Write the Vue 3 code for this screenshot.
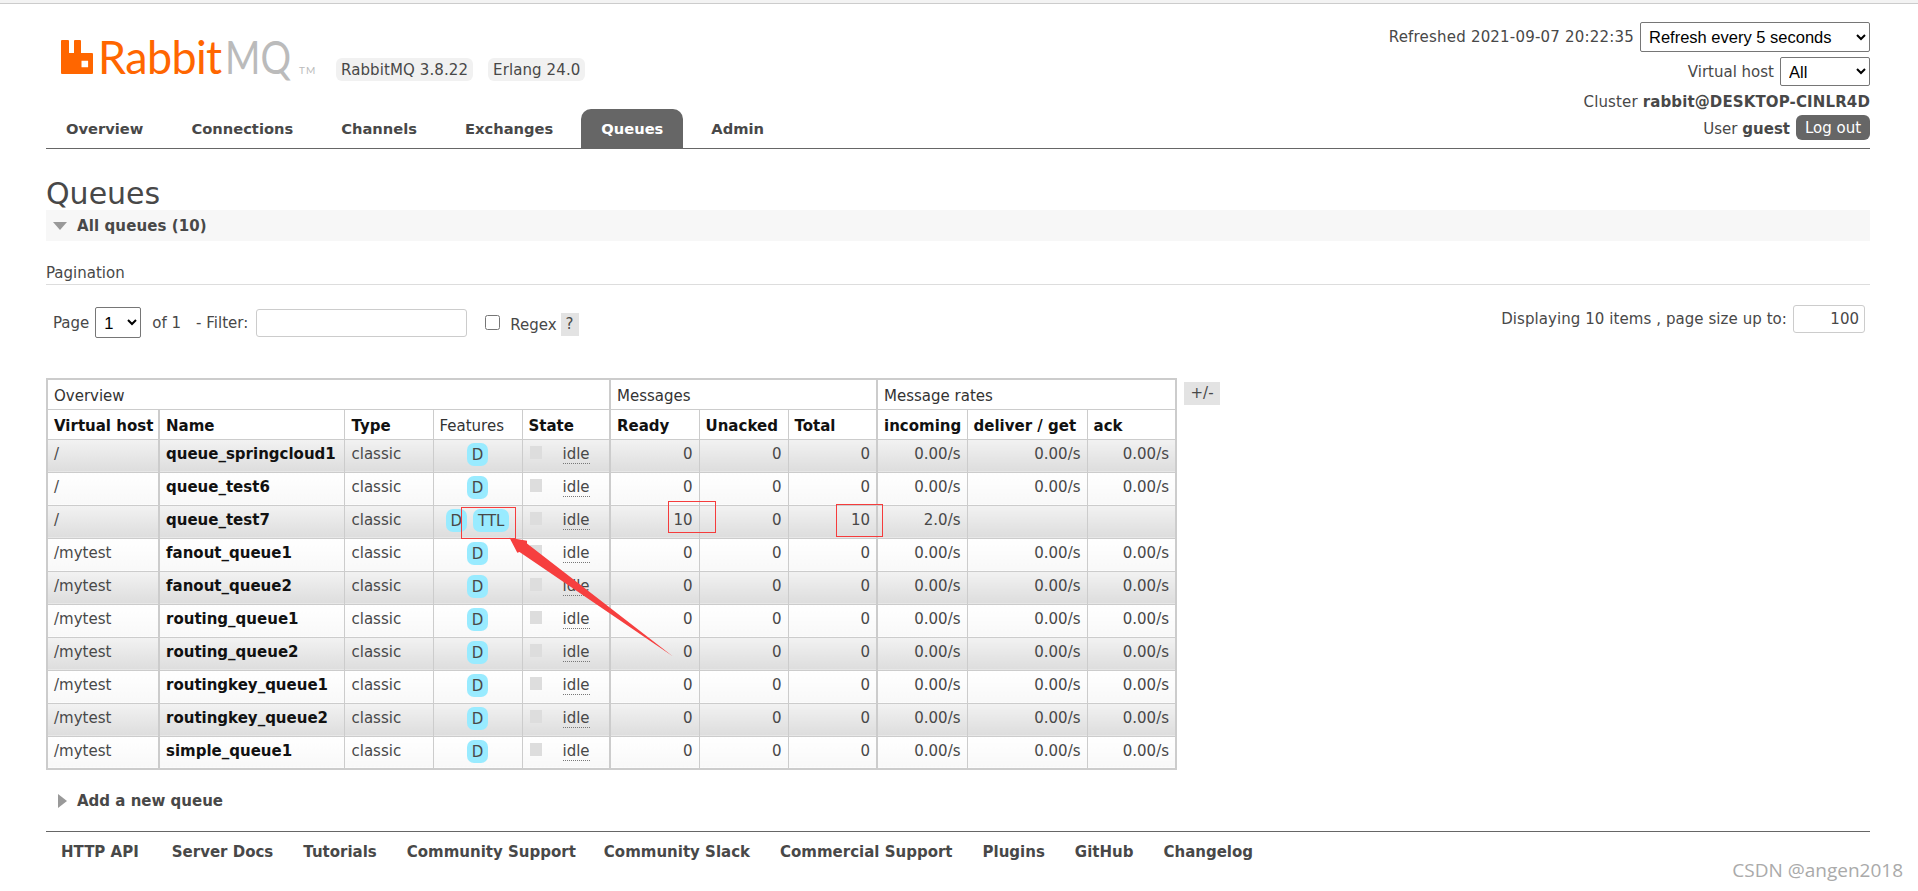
<script setup>
const tabs = ['Overview', 'Connections', 'Channels', 'Exchanges', 'Queues', 'Admin']
const footerLinks = ['HTTP API', 'Server Docs', 'Tutorials', 'Community Support', 'Community Slack', 'Commercial Support', 'Plugins', 'GitHub', 'Changelog']
const zero = { ready: 0, unacked: 0, total: 0, incoming: '0.00/s', deliver: '0.00/s', ack: '0.00/s', features: ['D'] }
const queues = [
  { vhost: '/', name: 'queue_springcloud1', ...zero },
  { vhost: '/', name: 'queue_test6', ...zero },
  { vhost: '/', name: 'queue_test7', ready: 10, unacked: 0, total: 10, incoming: '2.0/s', deliver: '', ack: '', features: ['D', 'TTL'] },
  { vhost: '/mytest', name: 'fanout_queue1', ...zero },
  { vhost: '/mytest', name: 'fanout_queue2', ...zero },
  { vhost: '/mytest', name: 'routing_queue1', ...zero },
  { vhost: '/mytest', name: 'routing_queue2', ...zero },
  { vhost: '/mytest', name: 'routingkey_queue1', ...zero },
  { vhost: '/mytest', name: 'routingkey_queue2', ...zero },
  { vhost: '/mytest', name: 'simple_queue1', ...zero }
]
</script>

<template>
  <div class="shell">
    <div class="strip"></div>
    <div class="page">
      <header class="header">
        <div class="brand">
          <div class="logo-row">
            <svg class="mark" width="33" height="34" viewBox="0 0 33 34">
              <path fill="#ff6600" fill-rule="evenodd" d="M1 0h6a1 1 0 0 1 1 1v12h5V1a1 1 0 0 1 1-1h5a1 1 0 0 1 1 1v12h11a1 1 0 0 1 1 1v19a1 1 0 0 1-1 1H1a1 1 0 0 1-1-1V1a1 1 0 0 1 1-1zM20.500 20.700v6.600h6.600v-6.600z" />
            </svg>
            <div class="wordmark"><span class="rabbit">Rabbit</span><span class="mq">MQ</span><span class="tm">TM</span></div>
            <span class="version first">RabbitMQ 3.8.22</span>
            <span class="version">Erlang 24.0</span>
          </div>
          <nav class="tabs">
            <span v-for="t in tabs" :key="t" class="tab" :class="{ active: t === 'Queues' }">{{ t }}</span>
          </nav>
        </div>
        <div class="session">
          <div class="s-row r1">
            <span class="spaced">Refreshed 2021-09-07 20:22:35</span>
            <select class="native refresh"><option>Refresh every 5 seconds</option></select>
          </div>
          <div class="s-row r2">
            <span>Virtual host</span>
            <select class="native vhost"><option>All</option></select>
          </div>
          <div class="s-row r3"><span class="cluster">Cluster <b>rabbit@DESKTOP-CINLR4D</b></span></div>
          <div class="s-row r4"><span class="user">User <b>guest</b></span><span class="logout">Log out</span></div>
        </div>
      </header>

      <h1 class="title">Queues</h1>
      <div class="all-bar"><i class="tri-down"></i><b>All queues (10)</b></div>

      <div class="pagination-head">Pagination</div>
      <div class="pager">
        <div class="pager-left">
          <span>Page</span>
          <select class="native page-sel"><option>1</option></select>
          <span class="of">of 1</span>
          <span class="filter">- Filter:</span>
          <input class="filter-input" type="text" />
          <input class="regex-box" type="checkbox" />
          <span class="regex">Regex</span>
          <span class="help">?</span>
        </div>
        <div class="pager-right">
          <span class="displaying">Displaying 10 items , page size up to:</span>
          <input class="size-input" type="text" value="100" />
        </div>
      </div>

      <div class="table-row">
        <table class="list">
          <colgroup>
            <col class="c1" /><col class="c2" /><col class="c3" /><col class="c4" /><col class="c5" />
            <col class="c6" /><col class="c7" /><col class="c8" /><col class="c9" /><col class="c10" /><col class="c11" />
          </colgroup>
          <thead>
            <tr class="group">
              <th colspan="5" class="thick-r">Overview</th>
              <th colspan="3" class="thick-r">Messages</th>
              <th colspan="3">Message rates</th>
            </tr>
            <tr class="cols">
              <th class="thick-r">Virtual host</th>
              <th>Name</th>
              <th class="type">Type</th>
              <th class="plain">Features</th>
              <th class="thick-r">State</th>
              <th>Ready</th>
              <th>Unacked</th>
              <th class="thick-r">Total</th>
              <th>incoming</th>
              <th>deliver / get</th>
              <th>ack</th>
            </tr>
          </thead>
          <tbody>
            <tr v-for="(q, i) in queues" :key="q.name" :class="i % 2 ? 'alt2' : 'alt1'">
              <td class="thick-r">{{ q.vhost }}</td>
              <td class="name">{{ q.name }}</td>
              <td class="type">classic</td>
              <td class="features">
                <span v-for="f in q.features" :key="f" class="feat">{{ f }}</span>
              </td>
              <td class="thick-r state"><i class="state-box"></i><span class="idle">idle</span></td>
              <td class="num">{{ q.ready }}</td>
              <td class="num">{{ q.unacked }}</td>
              <td class="num thick-r">{{ q.total }}</td>
              <td class="num">{{ q.incoming }}</td>
              <td class="num">{{ q.deliver }}</td>
              <td class="num">{{ q.ack }}</td>
            </tr>
          </tbody>
        </table>
        <span class="plus-minus">+/-</span>
      </div>

      <div class="add-new"><i class="tri-right"></i><b>Add a new queue</b></div>

      <footer class="footer">
        <span v-for="l in footerLinks" :key="l">{{ l }}</span>
      </footer>
    </div>

    <svg class="annotations" width="1918" height="891" viewBox="0 0 1918 891">
      <g fill="none" stroke="#f53c3c" stroke-width="1">
        <rect x="461.500" y="507.500" width="54" height="31" />
        <rect x="668.500" y="501.500" width="47" height="31" />
        <rect x="836.500" y="504.500" width="46" height="32" />
      </g>
      <polygon fill="#f63f3f" points="509.500,537.700 527,540.700 527,543.500 672.700,656.300 519.500,552 517.300,552.700" />
    </svg>
    <div class="watermark">CSDN @angen2018</div>
  </div>
</template>

<style>
html, body { margin: 0; background: #fff; overflow: hidden; }
</style>

<style scoped>
.shell {
  position: relative;
  width: 1918px;
  height: 891px;
  overflow: hidden;
  font-family: "DejaVu Sans", Verdana, sans-serif;
  font-size: 15px;
  color: #484848;
  background: #fff;
}
.strip { height: 3px; background: #f3f3f3; border-bottom: 1px solid #ccc; }
.page { padding: 0 48px 0 46px; }
.header {
  height: 145px;
  box-sizing: border-box;
  display: flex;
  justify-content: space-between;
  border-bottom: 1px solid #666;
}
.brand { display: flex; flex-direction: column; }
.logo-row { display: flex; align-items: flex-start; height: 105px; padding-top: 36px; padding-left: 15px; box-sizing: border-box; }
.mark { flex: none; display: block; }
.wordmark {
  margin-left: 4px;
  width: 238px;
  height: 34px;
  display: flex;
  align-items: baseline;
  font-family: "Lato", sans-serif;
  font-size: 46px;
  line-height: 34px;
}
.rabbit {
  color: #ff6600;
  letter-spacing: -0.6px;
  display: inline-block;
  width: 127px;
  transform: scaleX(0.975);
  transform-origin: left center;
}
.mq {
  color: #bbbbbb;
  width: 69px;
  display: inline-block;
  transform: scaleX(0.83);
  transform-origin: left center;
}
.tm { color: #bbb; font-size: 10px; letter-spacing: 1px; margin-left: 5px; }
.version {
  margin-top: 18px;
  height: 23px;
  line-height: 24px;
  padding: 0 5px;
  border-radius: 6px;
  background: #f1f1f1;
  color: #484848;
  letter-spacing: 0.1px;
  white-space: nowrap;
}
.version.first { margin-right: 15px; }
.tabs { display: flex; gap: 8px; height: 39px; }
.tab {
  height: 39px;
  line-height: 40px;
  padding: 0 20px;
  font-weight: 700;
  font-size: 14.700px;
  color: #484848;
  box-sizing: border-box;
  white-space: nowrap;
}
.tab.active { background: #666; color: #fff; border-radius: 10px 10px 0 0; }
.session { display: flex; flex-direction: column; align-items: flex-end; }
.s-row { display: flex; align-items: center; gap: 6px; white-space: nowrap; }
.spaced { letter-spacing: 0.2px; }
.cluster { letter-spacing: 0.13px; }
.user { padding-top: 2px; }
.r1 { margin-top: 18px; height: 30px; }
.r2 { margin-top: 5px; height: 29px; }
.r3 { margin-top: 4px; height: 24px; }
.r4 { margin-top: 1px; height: 25px; }
.native {
  font-family: "Liberation Sans", Arial, sans-serif;
  font-size: 16.500px;
  color: #000;
  background: #fff;
  border: 1px solid #767676;
  border-radius: 2px;
  box-sizing: border-box;
  padding: 0 0 0 4px;
  margin: 0;
}
.refresh { width: 230px; height: 30px; }
.vhost { width: 90px; height: 29px; }
.logout {
  height: 25px;
  line-height: 27px;
  width: 74px;
  text-align: center;
  background: #666;
  color: #fff;
  border-radius: 6px;
}
.title {
  margin: 28px 0 0;
  height: 33px;
  font-weight: 400;
  font-size: 30px;
  line-height: 33px;
  color: #484848;
}
.all-bar {
  height: 31px;
  line-height: 30px;
  background: #f7f7f7;
  display: flex;
  align-items: center;
  letter-spacing: 0.1px;
}
.tri-down {
  margin-left: 7px;
  margin-right: 10px;
  width: 0;
  height: 0;
  border-left: 7.500px solid transparent;
  border-right: 7.500px solid transparent;
  border-top: 8px solid #999;
}
.pagination-head {
  margin-top: 21px;
  height: 22px;
  line-height: 22px;
  border-bottom: 1px solid #ddd;
}
.pager {
  display: flex;
  justify-content: space-between;
  align-items: flex-start;
  margin-top: 20px;
  height: 73px;
}
.pager-left { display: flex; align-items: center; padding-left: 7px; height: 33px; margin-top: 1px; white-space: nowrap; }
.page-sel { width: 46px; height: 31px; margin-left: 6px; }
.of { margin-left: 11px; }
.filter { margin-left: 15px; }
.filter-input {
  width: 211px;
  height: 28px;
  margin: 0 0 0 8px;
  box-sizing: border-box;
  border: 1px solid #ccc;
  border-radius: 3px;
  background: #fff;
}
.regex-box { width: 15px; height: 15px; margin: 0 0 0 18px; }
.regex { margin-left: 10px; position: relative; top: 2px; }
.help {
  margin-left: 4px;
  width: 18px;
  height: 23px;
  line-height: 23px;
  text-align: center;
  background: #e3e3e3;
  position: relative;
  top: 2px;
}
.pager-right { display: flex; align-items: center; gap: 6px; padding-right: 5px; height: 28px; white-space: nowrap; }
.displaying { letter-spacing: 0.07px; }
.size-input {
  width: 72px;
  height: 28px;
  box-sizing: border-box;
  border: 1px solid #ccc;
  border-radius: 3px;
  margin: 0;
  padding: 0 5px;
  text-align: right;
  font-family: "DejaVu Sans", sans-serif;
  font-size: 15px;
  color: #484848;
}
.table-row { display: flex; align-items: flex-start; }
.list {
  table-layout: fixed;
  width: 1129px;
  border-collapse: collapse;
  border: 2px solid #ccc;
  flex: none;
}
.c1 { width: 112px; } .c2 { width: 185px; } .c3 { width: 89px; } .c4 { width: 89px; } .c5 { width: 88px; }
.c6 { width: 89px; } .c7 { width: 89px; } .c8 { width: 89px; } .c9 { width: 90px; } .c10 { width: 120px; } .c11 { width: 89px; }
.list th, .list td {
  border: 1px solid #ccc;
  padding: 0 6px;
  white-space: nowrap;
  overflow: visible;
  text-align: left;
  box-sizing: border-box;
}
.list th.type, .list td.type { padding-left: 7px; }
.list th { padding-top: 4px; }
.group th { height: 30px; font-weight: 400; color: #333; vertical-align: middle; }
.cols th { height: 30px; font-weight: 700; color: #111; vertical-align: middle; }
.cols th.plain { font-weight: 400; color: #333; }
.list th.thick-r, .list td.thick-r { border-right-width: 2px; }
.list td { height: 33px; vertical-align: top; padding-top: 5px; line-height: 18px; }
.alt1 td { background: linear-gradient(#f2f2f2, #dddddd); }
.alt2 td { background: linear-gradient(#ffffff, #f8f8f8); }
.list td.name { font-weight: 700; color: #111; }
.list td.num { text-align: right; }
.list td.features { text-align: center; padding: 3px 0 0; }
.feat {
  display: inline-block;
  height: 23px;
  line-height: 25px;
  padding: 0 5px;
  background: #99ebff;
  border-radius: 7px;
}
.feat + .feat { margin-left: 6px; }
.list td.state { padding-left: 7px; }
.state-box { display: inline-block; width: 12px; height: 13px; background: #ddd; margin-right: 21px; vertical-align: top; margin-top: 1px; }
.idle { border-bottom: 1px dotted #777; line-height: 17px; display: inline-block; }
.plus-minus {
  margin: 4px 0 0 7px;
  width: 36px;
  height: 23px;
  line-height: 23px;
  text-align: center;
  background: #e3e3e3;
  color: #484848;
}
.add-new {
  margin-top: 18px;
  height: 26px;
  display: flex;
  align-items: center;
}
.tri-right {
  margin-left: 12px;
  margin-right: 10px;
  width: 0;
  height: 0;
  border-top: 7px solid transparent;
  border-bottom: 7px solid transparent;
  border-left: 9px solid #999;
}
.footer {
  margin-top: 17px;
  border-top: 1px solid #666;
  padding: 8px 0 0 15px;
  display: flex;
  gap: 30px;
  font-weight: 700;
  line-height: 24px;
}
.footer span:first-child { margin-right: 3px; }
.footer span:nth-child(4) { margin-right: -2px; }
.annotations { position: absolute; left: 0; top: 0; pointer-events: none; }
.watermark {
  position: absolute;
  right: 15px;
  top: 857px;
  font-family: "Open Sans", sans-serif;
  font-size: 19px;
  line-height: 26px;
  color: #aaa;
}
</style>
